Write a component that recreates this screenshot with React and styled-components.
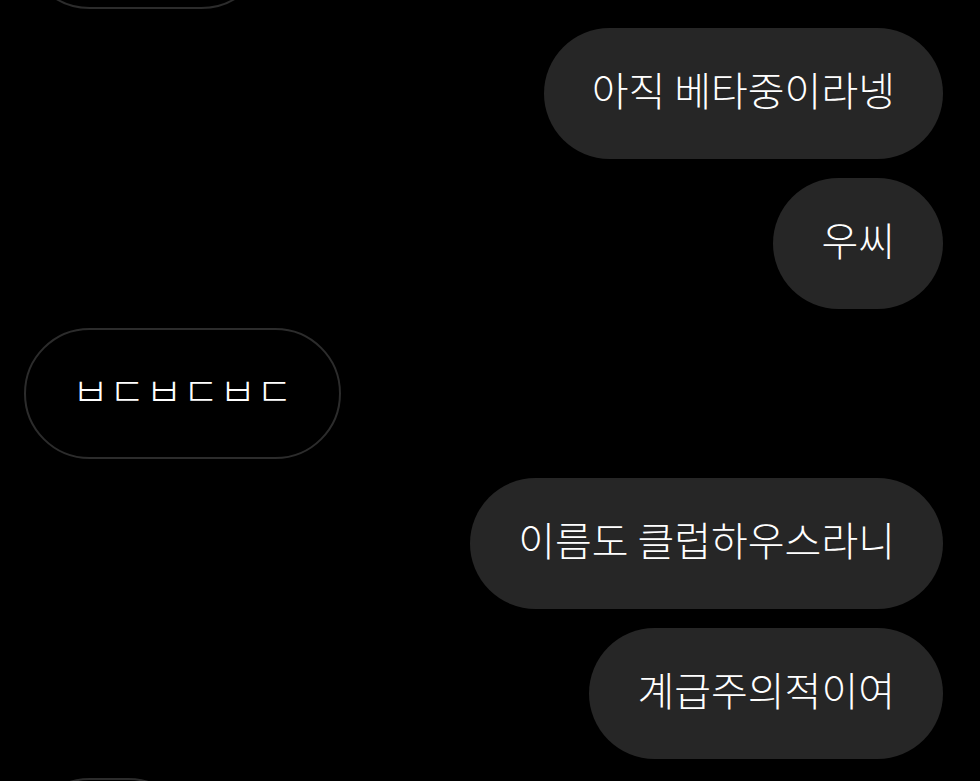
import React from "react";
import styled, { createGlobalStyle } from "styled-components";

const Global = createGlobalStyle`
  html, body {
    margin: 0;
    padding: 0;
    background: #000;
    overflow: hidden;
  }
  body {
    font-family: "Noto Sans CJK KR", "Noto Sans", sans-serif;
  }
`;

const Thread = styled.div`
  display: flex;
  flex-direction: column;
  gap: 19px;
  margin-top: -122px;
  padding: 0 37px 0 24px;
`;

const Row = styled.div`
  display: flex;
  justify-content: ${(p) => (p.$mine ? "flex-end" : "flex-start")};
`;

const Bubble = styled.div`
  box-sizing: border-box;
  height: 131px;
  display: flex;
  align-items: center;
  padding: 0 ${(p) => (p.$mine ? 48 : 46)}px 10px;
  border-radius: 66px;
  font-size: 40px;
  font-weight: 300;
  line-height: 1;
  color: #fff;
  white-space: nowrap;
  background: ${(p) => (p.$mine ? "#262626" : "transparent")};
  border: ${(p) => (p.$mine ? "none" : "2.5px solid #2c2c2c")};
`;

const messages = [
  { mine: false, text: "ㅋㅋㅋㅋ" },
  { mine: true, text: "아직 베타중이라넹" },
  { mine: true, text: "우씨" },
  { mine: false, text: "ㅂㄷㅂㄷㅂㄷ" },
  { mine: true, text: "이름도 클럽하우스라니" },
  { mine: true, text: "계급주의적이여" },
  { mine: false, text: "ㅋㅋ" },
];

export default function App() {
  return (
    <>
      <Global />
      <Thread>
        {messages.map((m, i) => (
          <Row key={i} $mine={m.mine}>
            <Bubble $mine={m.mine}>{m.text}</Bubble>
          </Row>
        ))}
      </Thread>
    </>
  );
}
